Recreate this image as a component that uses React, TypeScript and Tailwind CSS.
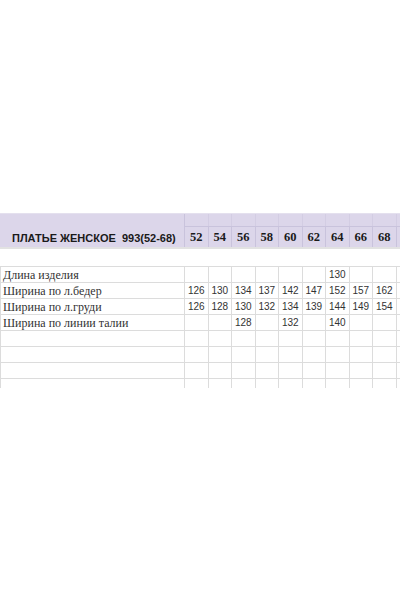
import { FC } from 'react';

const sizes = ['52', '54', '56', '58', '60', '62', '64', '66', '68'];

const rows: { label: string; values: string[] }[] = [
  { label: 'Длина изделия', values: ['', '', '', '', '', '', '130', '', ''] },
  { label: 'Ширина по л.бедер', values: ['126', '130', '134', '137', '142', '147', '152', '157', '162'] },
  { label: 'Ширина по л.груди', values: ['126', '128', '130', '132', '134', '139', '144', '149', '154'] },
  { label: 'Ширина по линии талии', values: ['', '', '128', '', '132', '', '140', '', ''] },
  { label: '', values: ['', '', '', '', '', '', '', '', ''] },
  { label: '', values: ['', '', '', '', '', '', '', '', ''] },
  { label: '', values: ['', '', '', '', '', '', '', '', ''] },
];

const SizeHeader: FC = () => {
  return (
    <div className="flex h-[34px] bg-[#dcd6ea] border-t border-[#e4e0ee]">
      <div className="w-[185px] shrink-0 border-r border-[#c9c3dc] flex items-end pb-[1px] pl-[12px]">
        <span className="whitespace-pre font-['Liberation_Sans',Arial,sans-serif] font-bold text-[11px] leading-[16px] text-[#1a1a1a]">
          ПЛАТЬЕ ЖЕНСКОЕ  993(52-68)
        </span>
      </div>
      <div className="flex-1 flex flex-col">
        <div className="h-[15px] flex border-b border-[#c9c3dc]">
          {sizes.map((s) => (
            <div key={s} className="w-[23.5px] shrink-0 border-r border-[#d3cde3]" />
          ))}
        </div>
        <div className="flex-1 flex">
          {sizes.map((s) => (
            <div
              key={s}
              className="w-[23.5px] shrink-0 border-r border-[#c9c3dc] flex items-center justify-center pt-[1px] font-['Liberation_Serif',serif] font-bold text-[12.5px] text-[#1a1a1a]"
            >
              {s}
            </div>
          ))}
        </div>
      </div>
    </div>
  );
};

export default function App() {
  return (
    <div className="w-[400px] h-[601px] bg-white overflow-hidden pt-[213px]">
      <SizeHeader />
      <div className="h-[2px] bg-[#e2e2e2]" />
      <div className="h-[17px]" />
      <div className="border-t border-[#dcdcdc]">
        {rows.map((r, i) => (
          <div key={i} className="flex h-[16px] border-b border-[#dcdcdc]">
            <div className="w-[185px] shrink-0 border-l border-r border-[#dcdcdc] pl-[2px] flex items-center font-['Liberation_Serif',serif] text-[12px] text-[#333]">
              {r.label}
            </div>
            {r.values.map((v, j) => (
              <div
                key={j}
                className="w-[23.5px] shrink-0 border-r border-[#dcdcdc] flex items-center justify-center font-['Liberation_Sans',Arial,sans-serif] text-[10px] text-[#333]"
              >
                {v}
              </div>
            ))}
          </div>
        ))}
        {/* last cut-off row */}
        <div className="flex h-[9px]">
          <div className="w-[185px] shrink-0 border-l border-r border-[#dcdcdc]" />
          {sizes.map((s) => (
            <div key={s} className="w-[23.5px] shrink-0 border-r border-[#dcdcdc]" />
          ))}
        </div>
      </div>
    </div>
  );
}
